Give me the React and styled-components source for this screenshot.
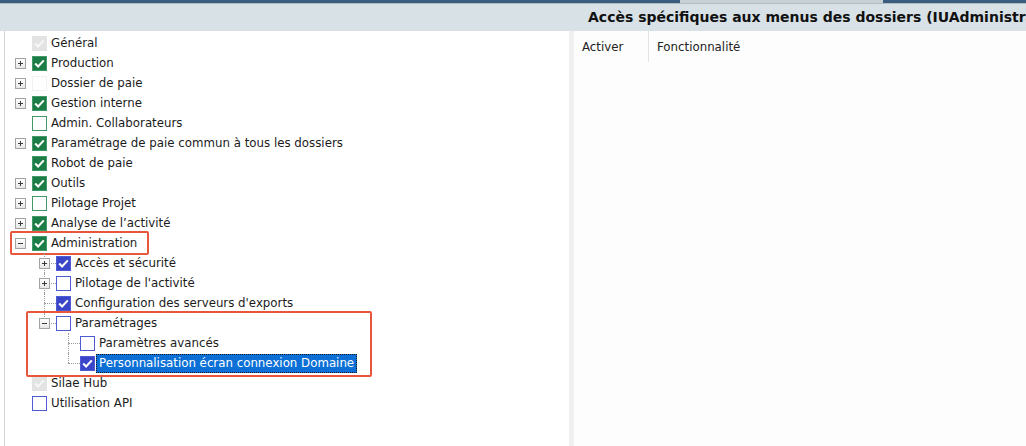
import React from "react";
import styled, { createGlobalStyle, css } from "styled-components";

const GlobalStyle = createGlobalStyle`
    html, body {
        margin: 0;
        padding: 0;
        background: #ffffff;
        overflow: hidden;
    }
    body {
        font-family: "DejaVu Sans", sans-serif;
        font-size: 11.8px;
        color: #1b1b1b;
    }
`;

const Screen = styled.div`
    width: 1026px;
    height: 446px;
    display: flex;
    flex-direction: column;
`;

// top stripe with the tab edges
const Stripe = styled.div`
    display: flex;
    height: 3px;
    border-bottom: 1px solid #aebcc6;
`;

const StripePart = styled.div`
    height: 100%;
    width: ${props => (props.width ? `${props.width}px` : "auto")};
    flex: ${props => (props.width ? "none" : 1)};
    background: ${props => (props.light ? "#c9d1d7" : "#3a5d7e")};
`;

const Columns = css`
    display: grid;
    grid-template-columns: 569px 5px 1fr;
`;

const HeaderBar = styled.div`
    ${Columns};
    height: 27px;
    background: #d7e1e6;
`;

const Title = styled.h1`
    grid-column: 3;
    margin: 0;
    padding-left: 14px;
    font-family: "DejaVu Sans", sans-serif;
    font-size: 14px;
    font-weight: 700;
    line-height: 27px;
    color: #111;
    white-space: nowrap;
    overflow: hidden;
`;

const Body = styled.div`
    ${Columns};
    flex: 1;
    min-height: 0;
`;

const LeftPanel = styled.div`
    margin-left: 4px;
    border-left: 1px solid #d4d4d4;
    background: #ffffff;
`;

const Splitter = styled.div`
    background: #efefef;
`;

const RightPanel = styled.div`
    background: #fdfdfd;
`;

const GridHead = styled.div`
    display: flex;
    height: 31px;
    align-items: center;
`;

const HeadCell = styled.div`
    width: ${props => props.width}px;
    height: 100%;
    display: flex;
    align-items: center;
    padding-left: 8px;
    box-sizing: border-box;
    border-right: ${props => (props.divider ? "1px solid #e3e3e3" : "none")};
    color: #222;
`;

const Tree = styled.div`
    display: flex;
    flex-direction: column;
    padding-top: 2px;
`;

const Row = styled.div`
    display: flex;
    align-items: center;
    height: 20px;
    width: fit-content;
    padding-left: ${props => 3 + props.level * 24}px;
    white-space: nowrap;
`;

const Slot = styled.div`
    position: relative;
    width: 24px;
    height: 20px;
    flex: none;
    display: flex;
    align-items: center;
    justify-content: center;

    ${props =>
        props.line &&
        css`
            &::before {
                content: "";
                position: absolute;
                left: 12px;
                top: 0;
                height: ${props.line === "last" ? "10px" : "20px"};
                border-left: 1px dotted #9a9a9a;
            }
            &::after {
                content: "";
                position: absolute;
                left: 12px;
                right: 0;
                top: 10px;
                border-top: 1px dotted #9a9a9a;
            }
        `}
`;

const Expander = styled.div`
    position: relative;
    z-index: 1;
    width: 9px;
    height: 9px;
    border: 1px solid #a3a3a3;
    background: linear-gradient(#ffffff, #e6e6e6);

    &::before {
        content: "";
        position: absolute;
        left: 2px;
        right: 2px;
        top: 4px;
        height: 1px;
        background: #3b3b3b;
    }

    ${props =>
        props.open ||
        css`
            &::after {
                content: "";
                position: absolute;
                top: 2px;
                bottom: 2px;
                left: 4px;
                width: 1px;
                background: #3b3b3b;
            }
        `}
`;

const boxTones = {
    green: { fill: "#1c7c46", edge: "#3f9a68" },
    blue: { fill: "#3a45c9", edge: "#4f5bd3" },
    gray: { fill: "#e3e3e3", edge: "#e3e3e3" },
    none: { fill: "#ffffff", edge: "#f1f1f1" },
};

const Box = styled.div`
    width: 15px;
    height: 15px;
    box-sizing: border-box;
    flex: none;
    margin-right: 4px;
    display: flex;
    align-items: center;
    justify-content: center;
    border: 1px solid ${props => boxTones[props.tone].edge};
    background: ${props =>
        props.checked ? boxTones[props.tone].fill : "#ffffff"};
`;

const Label = styled.span`
    line-height: 17px;
    padding: 0 2px;
    margin-left: -3px;
    border: 1px dotted transparent;

    ${props =>
        props.selected &&
        css`
            background: #0b6fd6;
            color: #ffffff;
            border-color: #1a1a1a;
        `}
`;

const Highlight = styled.div`
    position: relative;
    width: fit-content;

    &::after {
        content: "";
        position: absolute;
        top: ${props => props.inset[0]}px;
        right: ${props => props.inset[1]}px;
        bottom: ${props => props.inset[2]}px;
        left: ${props => props.inset[3]}px;
        border: 2px solid #e8573d;
        border-radius: 2px;
        pointer-events: none;
    }
`;

const Check = ({ tone }) => (
    <svg width="11" height="9" viewBox="0 0 11 9">
        <path
            d="M1.2 4.6 L4.1 7.4 L9.8 1.4"
            fill="none"
            stroke={tone === "gray" ? "#f7f7f7" : "#ffffff"}
            strokeWidth="2.1"
        />
    </svg>
);

const TreeRow = ({ item }) => (
    <Row level={item.level || 0}>
        <Slot line={item.line}>
            {item.expander && <Expander open={item.expander === "minus"} />}
        </Slot>
        <Box tone={item.tone} checked={item.checked}>
            {item.checked && <Check tone={item.tone} />}
        </Box>
        <Label selected={item.selected}>{item.label}</Label>
    </Row>
);

const tree = [
    { label: "Général", tone: "gray", checked: true },
    { label: "Production", tone: "green", checked: true, expander: "plus" },
    { label: "Dossier de paie", tone: "none", expander: "plus" },
    { label: "Gestion interne", tone: "green", checked: true, expander: "plus" },
    { label: "Admin. Collaborateurs", tone: "green" },
    {
        label: "Paramétrage de paie commun à tous les dossiers",
        tone: "green",
        checked: true,
        expander: "plus",
    },
    { label: "Robot de paie", tone: "green", checked: true },
    { label: "Outils", tone: "green", checked: true, expander: "plus" },
    { label: "Pilotage Projet", tone: "green", expander: "plus" },
    { label: "Analyse de l’activité", tone: "green", checked: true, expander: "plus" },
    {
        highlight: [-2, -9, -2, 5],
        rows: [
            { label: "Administration", tone: "green", checked: true, expander: "minus" },
        ],
    },
    { label: "Accès et sécurité", level: 1, tone: "blue", checked: true, expander: "plus", line: "mid" },
    { label: "Pilotage de l'activité", level: 1, tone: "blue", expander: "plus", line: "mid" },
    { label: "Configuration des serveurs d'exports", level: 1, tone: "blue", checked: true, line: "mid" },
    {
        highlight: [-2, -15, -4, 21],
        rows: [
            { label: "Paramétrages", level: 1, tone: "blue", expander: "minus", line: "last" },
            { label: "Paramètres avancés", level: 2, tone: "blue", line: "mid" },
            {
                label: "Personnalisation écran connexion Domaine",
                level: 2,
                tone: "blue",
                checked: true,
                line: "last",
                selected: true,
            },
        ],
    },
    { label: "Silae Hub", tone: "gray", checked: true },
    { label: "Utilisation API", tone: "blue" },
];

export default function App() {
    return (
        <Screen>
            <GlobalStyle />
            <Stripe>
                <StripePart width={680} />
                <StripePart width={203} light />
                <StripePart />
            </Stripe>
            <HeaderBar>
                <Title>Accès spécifiques aux menus des dossiers (IUAdministration)</Title>
            </HeaderBar>
            <Body>
                <LeftPanel>
                    <Tree>
                        {tree.map((entry, i) =>
                            entry.rows ? (
                                <Highlight key={i} inset={entry.highlight}>
                                    {entry.rows.map((row, j) => (
                                        <TreeRow key={j} item={row} />
                                    ))}
                                </Highlight>
                            ) : (
                                <TreeRow key={i} item={entry} />
                            )
                        )}
                    </Tree>
                </LeftPanel>
                <Splitter />
                <RightPanel>
                    <GridHead>
                        <HeadCell width={75} divider>
                            Activer
                        </HeadCell>
                        <HeadCell width={200}>Fonctionnalité</HeadCell>
                    </GridHead>
                </RightPanel>
            </Body>
        </Screen>
    );
}
